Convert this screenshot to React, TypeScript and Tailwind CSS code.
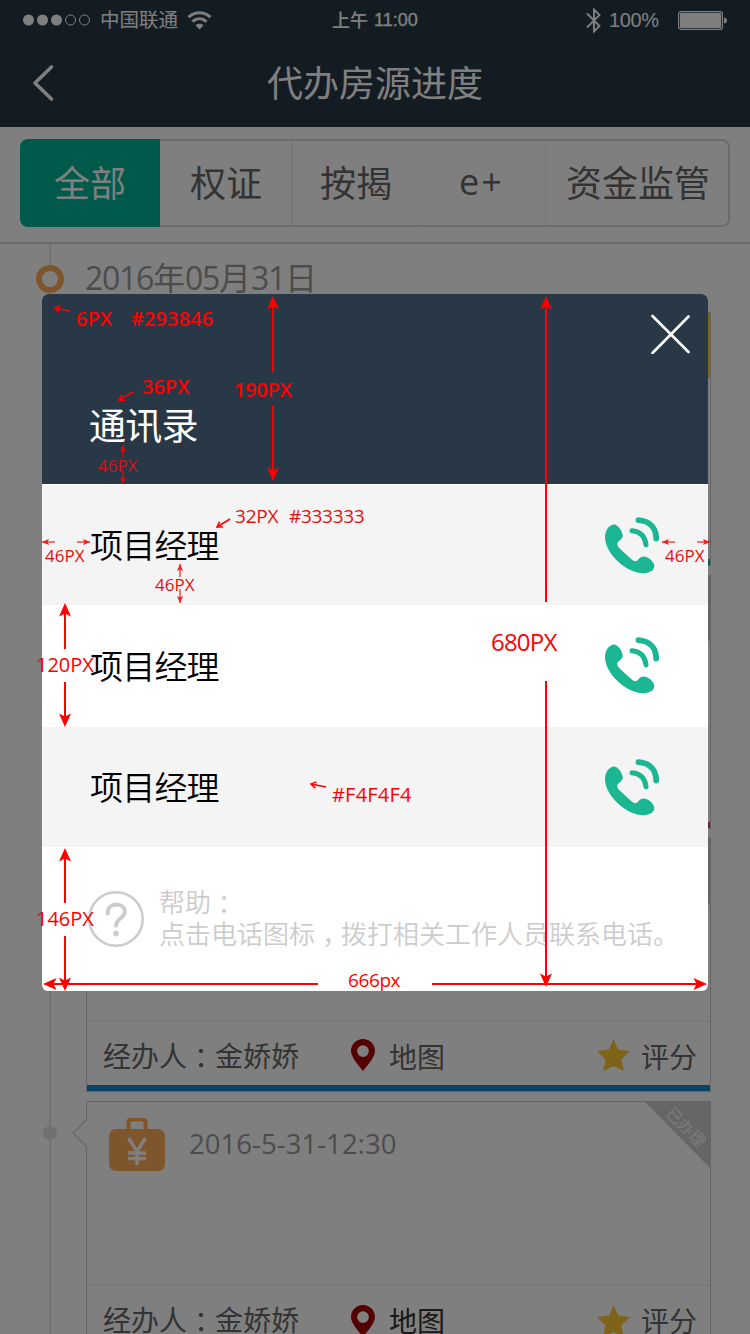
import React from "react";

const FONT = "font-['Open_Sans','Noto_Sans_CJK_SC',sans-serif]";

function Colon() {
  return (
    <span className="relative top-[2px] font-['Noto_Sans_CJK_TC',sans-serif] leading-[0]" lang="zh-TW">
      ：
    </span>
  );
}

function StatusBar() {
  return (
    <div className="flex h-10 items-center pl-[23px] pr-[22px] text-white">
      <svg width="68" height="12" viewBox="0 0 68 12" fill="currentColor">
        <circle cx="5.5" cy="6" r="5.5" />
        <circle cx="19.5" cy="6" r="5.5" />
        <circle cx="33.5" cy="6" r="5.5" />
        <circle cx="47.5" cy="6" r="5" fill="none" stroke="currentColor" />
        <circle cx="61.5" cy="6" r="5" fill="none" stroke="currentColor" />
      </svg>
      <span className="ml-[9px] w-[80px] whitespace-nowrap text-[19.5px] leading-10">中国联通</span>
      <svg className="ml-[7px]" width="25" height="19" viewBox="0 0 25 19" fill="none" stroke="currentColor" strokeWidth="3">
        <path d="M1.5 6.2C8 .2 17 .2 23.5 6.2" />
        <path d="M5.5 10.6c4.2-3.8 9.800-3.800 14 0" />
        <path d="M12.500 18.500l-4-4.300c2.400-2 5.600-2 8 0z" fill="currentColor" stroke="none" />
      </svg>
      <div className="ml-[120px] flex w-[89px] items-center whitespace-nowrap text-[18px] font-medium leading-10">
        <span>上午</span>
        <span className="ml-[6px] font-['Liberation_Sans',sans-serif] [-webkit-text-stroke:0.3px_currentColor]">11:00</span>
      </div>
      <svg className="ml-[165px]" width="16" height="27" viewBox="0 0 16 27" fill="none" stroke="currentColor" strokeWidth="1.900">
        <path d="M1 6.500l12.500 12.500L8 24.500V2.500l5.500 5.500L1 20.500" />
      </svg>
      <span className="ml-[7px] w-[55px] font-['Liberation_Sans',sans-serif] text-[20px] leading-10 tracking-[-0.4px]">100%</span>
      <svg className="ml-auto" width="50" height="19" viewBox="0 0 50 19">
        <rect x=".6" y=".6" width="43.800" height="17.800" rx="2.500" fill="none" stroke="currentColor" strokeWidth="1.200" />
        <rect x="2" y="2" width="41" height="15" rx="1" fill="currentColor" />
        <path d="M46 6.500c4 0 4 6 0 6z" fill="currentColor" />
      </svg>
    </div>
  );
}

function NavBar() {
  return (
    <div className="grid h-[87px] grid-cols-[100px_1fr_100px] items-center text-white">
      <svg className="-mt-[2px] ml-8" width="23" height="38" viewBox="0 0 23 38" fill="none" stroke="currentColor" strokeWidth="3.600" strokeLinecap="round" strokeLinejoin="round">
        <path d="M19.500 3L3 19l16.500 16" />
      </svg>
      <h1 className="text-center text-[36px] leading-[87px]">代办房源进度</h1>
    </div>
  );
}

function Tabs() {
  return (
    <div className="h-[117px] border-b-2 border-[#d4d4d4] px-5 pt-3">
      <div className="flex h-[88px] text-[36px] leading-[86px] text-[#666]">
        <div className="w-[140px] rounded-l-[8px] bg-[#00b496] pl-[34px] leading-[90px] text-white">全部</div>
        <div className="flex flex-1 rounded-r-[8px] border-2 border-l-0 border-[#d6d6d6]">
          <div className="w-[133px] border-r-2 border-[#f0f0f0] pl-[30px]">权证</div>
          <div className="w-[129px] border-r-2 border-[#f8f8f8] pl-[27px]">按揭</div>
          <div className="w-[125px] border-r-2 border-[#f8f8f8] pl-[37px] leading-[81px] tracking-[2px]">e+</div>
          <div className="flex-1 whitespace-nowrap pl-[19px]">资金监管</div>
        </div>
      </div>
    </div>
  );
}

function Pin() {
  return (
    <svg width="24" height="32" viewBox="0 0 24 32" fill="#a80000">
      <path fillRule="evenodd" d="M12 0C5.200 0 0 5.300 0 12c0 6.500 7.500 14 12 20 4.500-6 12-13.500 12-20C24 5.300 18.800 0 12 0zm0 6.200a5.900 5.900 0 110 11.800 5.900 5.900 0 010-11.800z" />
    </svg>
  );
}

function Star() {
  return (
    <svg width="33" height="32" viewBox="0 0 33 32" fill="#ffc631">
      <path d="M16.500 0l4.600 10.500 11.900 1.600-8.600 8.400 2.500 11.500-10.400-5-10.400 5 2.400-11.500L0 12.100l12-1.600z" />
    </svg>
  );
}

type CardProps = {
  bar: string;
  ribbon: string;
  head: string;
  date?: string;
  status?: string;
  handler?: string;
  mapColor?: string;
  iconShift?: string;
};

function Card({ bar, ribbon, head, date, status, handler, mapColor = "text-[#666]", iconShift = "-mt-[4px]" }: CardProps) {
  return (
    <section className="relative h-[254px] w-[625px] border border-[#c8c8c8] bg-white">
      <svg className="absolute -left-[15px] top-[16px]" width="16" height="30" viewBox="0 0 16 30">
        <path d="M15 1L1 15l14 14" fill="#fff" stroke="#d2d2d2" strokeWidth="1.400" />
        <path d="M15.500 2v26" stroke="#fff" />
      </svg>
      <div className={head}>
        <svg className="ml-[22px] mt-[16px]" width="56" height="53" viewBox="0 0 56 53">
          <path d="M19.500 12V4q0-2.500 2.500-2.500h12q2.500 0 2.500 2.500v8" fill="none" stroke="#ffab57" strokeWidth="4" />
          <rect y="11" width="56" height="42" rx="7" fill="#ffab57" />
          <path d="M19.500 20L28 33.500 36.500 20M28 33v14M19 35h18M19 40.500h18" fill="none" stroke="#fff" strokeWidth="3.400" />
        </svg>
        {date && <span className="ml-[24px] mt-[22px] text-[27.500px] leading-[40px] tracking-[0.05px] text-[#999]">{date}</span>}
      </div>
      <div className="flex h-[63px] items-center whitespace-nowrap pl-[16px] pt-[7px] text-[28px] leading-[50px] text-[#666]">
        {handler && (
          <>
            <span className="-mt-[3px] w-[248px]">经办人<Colon />{handler}</span>
            <div className={iconShift}><Pin /></div>
            <span className={`ml-[14px] w-[208px] ${mapColor}`}>地图</span>
            <div className={iconShift}><Star /></div>
            <span className="ml-[11px]">评分</span>
          </>
        )}
      </div>
      <div className={bar} />
      <svg className="absolute -top-px right-0" width="65" height="67" viewBox="0 0 65 67">
        <path className={ribbon} d="M0 1h65v66z" />
      </svg>
      {status && (
        <span className="absolute -right-[6px] top-[15px] w-[60px] rotate-45 text-center text-[16px] leading-[20px] text-[#f8f8f8]">{status}</span>
      )}
    </section>
  );
}

const HEAD = "flex h-[183px] items-start border-b-2 border-[#f3f3f3]";
const HEAD_LAST = "flex h-[184px] items-start border-b-2 border-[#f3f3f3]";

function Timeline() {
  return (
    <div className="grid grid-cols-[86px_1fr]">
      <div className="relative">
        <div className="ml-[49px] h-[1092px] w-[2px] bg-[#e4e4e4]" />
        <svg className="absolute left-[36px] top-[21px]" width="28" height="28" viewBox="0 0 28 28">
          <circle cx="14" cy="14" r="11" fill="#fff" stroke="#ffab57" strokeWidth="6" />
        </svg>
        <div className="absolute left-[43px] top-[882px] h-[14px] w-[14px] rounded-full bg-[#e2e2e2]" />
      </div>
      <div>
        <div className="-ml-px flex h-[68px] items-center text-[32px] leading-[68px] text-[#999]">
          <span className="tracking-[-1.300px]">2016</span>
          <span>年</span>
          <span className="tracking-[-1.300px]">05</span>
          <span>月</span>
          <span className="tracking-[-1.300px]">31</span>
          <span>日</span>
        </div>
        <div className="flex flex-col gap-[9px]">
          <Card head={HEAD} bar="h-[6px] bg-[#00b4b4]" ribbon="fill-[#ffc631]" />
          <Card head={HEAD} bar="h-[6px] bg-[#d84050]" ribbon="fill-[#cccccc]" />
          <Card head={HEAD} bar="h-[6px] bg-[#0f88cc]" ribbon="fill-[#cccccc]" handler="金娇娇" />
          <Card
            head={HEAD_LAST}
            bar="h-[6px] bg-[#0f88cc]"
            ribbon="fill-[#cccccc]"
            date="2016-5-31-12:30"
            status="已办理"
            handler="金娇娇"
            mapColor="text-[#333]"
            iconShift=""
          />
        </div>
      </div>
    </div>
  );
}

function PhoneIcon() {
  return (
    <svg width="54" height="57" viewBox="0 0 54 57" fill="none" stroke="#1bb793" strokeLinecap="round">
      <path
        fill="#1bb793"
        stroke="none"
        d="M8.500 7.500c3.500-.8 8.700 5.500 9.200 11 .2 4.500-5.400 5-5.400 8.500 0 2.500 2 4 4 6l11 10c2 1.700 4.500 1.500 6-.5 2.500-3.500 6-3.700 10-1.500 3.500 2 6.200 5.500 6 8.500-.4 4.500-6 6.800-11.500 6.800C22 56 0 37 0 20 0 13 4.500 8 8.500 7.500z"
      />
      <path d="M33.500 3.200C44.500 4 51 10.500 51.200 21.500" strokeWidth="5.800" />
      <path d="M27 13.700c8.500.8 13 5.500 14 14" strokeWidth="5" />
    </svg>
  );
}

function ContactRow({ className }: { className: string }) {
  return (
    <div className={`flex items-center justify-between pl-[48px] pr-[49px] ${className}`}>
      <span className="pt-[2px] text-[33px] font-[350] leading-[60px] tracking-[-0.800px]">项目经理</span>
      <PhoneIcon />
    </div>
  );
}

function ContactsDialog() {
  return (
    <div className="absolute left-[42px] top-[294px] flex h-[697px] w-[666px] flex-col overflow-hidden rounded-[6px] bg-white text-black">
      <header className="mb-px flex h-[190px] flex-col justify-between bg-[#293846] pb-[28px] pl-[47px] pr-[18px] pt-[20px] text-white">
        <svg className="self-end" width="40" height="40" viewBox="0 0 40 40" fill="none" stroke="currentColor" strokeWidth="2.600" strokeLinecap="round">
          <path d="M2.500 2L38.500 38M38.500 2.500L2.500 39" />
        </svg>
        <h2 className="text-[37px] leading-[60px] tracking-[-0.800px]">通讯录</h2>
      </header>
      <ContactRow className="h-[120px] bg-[#f4f4f4]" />
      <ContactRow className="h-[122px] bg-white pb-px" />
      <ContactRow className="h-[120px] bg-[#f4f4f4]" />
      <footer className="flex h-[144px] items-center pl-[46px] text-[#ccc]">
        <svg width="56" height="56" viewBox="0 0 56 56" fill="none" stroke="currentColor">
          <circle cx="28" cy="28" r="26.700" strokeWidth="2.600" />
          <path d="M19.800 22.500v-1c0-5 3.500-8 8.500-8s8.500 3 8.500 7.200c0 6.300-8.800 6.800-8.800 14" strokeWidth="4" strokeLinecap="round" />
          <circle cx="28" cy="42.500" r="2.900" fill="currentColor" stroke="none" />
        </svg>
        <p className="-mt-[2px] ml-[15px] whitespace-nowrap text-[26px] font-[350] leading-[32px]">
          帮助<Colon /><br />点击电话图标<span className="relative left-[7px]">，</span>拨打相关工作人员联系电话。
        </p>
      </footer>
    </div>
  );
}

const BIG_ARROWS = [
  [273, 372, 273, 296], [273, 406, 273, 481],
  [546, 602, 546, 296], [546, 681, 546, 987],
  [65, 649, 65, 603], [65, 682, 65, 727],
  [65, 903, 65, 848], [65, 936, 65, 991],
  [318, 984, 43, 984], [432, 984, 707, 984],
];

const SMALL_ARROWS = [
  [55, 542, 42, 542], [77, 542, 90, 542],
  [675, 542, 662, 542], [697, 542, 710, 542],
  [123, 457, 123, 445], [123, 470, 123, 484],
  [180, 577, 180, 564], [180, 589, 180, 603],
];

const POINTERS = [
  [70, 311, 55, 308], [133, 392, 119, 400],
  [230, 519, 217, 527], [326, 787, 311, 784],
];

function angle([x1, y1, x2, y2]: number[]) {
  return (Math.atan2(y2 - y1, x2 - x1) * 180) / Math.PI;
}

function ArrowLayer() {
  return (
    <svg className="absolute left-0 top-0" width="750" height="1334" viewBox="0 0 750 1334" fill="none" stroke="#f00">
      {BIG_ARROWS.map((a, i) => (
        <g key={`b${i}`}>
          <line x1={a[0]} y1={a[1]} x2={a[2] - Math.sign(a[2] - a[0]) * 5} y2={a[3] - Math.sign(a[3] - a[1]) * 5} strokeWidth="2" />
          <path d="M0 0L-13.500 -6L-10.500 0L-13.500 6Z" fill="#f00" stroke="none" transform={`translate(${a[2]} ${a[3]}) rotate(${angle(a)})`} />
        </g>
      ))}
      {SMALL_ARROWS.map((a, i) => (
        <g key={`s${i}`} opacity=".9">
          <line x1={a[0]} y1={a[1]} x2={a[2]} y2={a[3]} strokeWidth="1.200" />
          <path d="M0 0L-7 -3L-5.500 0L-7 3Z" fill="#f00" stroke="none" transform={`translate(${a[2]} ${a[3]}) rotate(${angle(a)})`} />
        </g>
      ))}
      {POINTERS.map((a, i) => (
        <g key={`p${i}`} strokeWidth="1.500">
          <line x1={a[0]} y1={a[1]} x2={a[2]} y2={a[3]} />
          <path d="M-5 -3.200L0 0L-5 3.200" transform={`translate(${a[2]} ${a[3]}) rotate(${angle(a)})`} />
        </g>
      ))}
    </svg>
  );
}

const LABELS = [
  { text: "6PX", className: "left-[76px] top-[309px] text-[20px] font-semibold text-[#f00]" },
  { text: "#293846", className: "left-[131px] top-[309px] text-[20px] font-semibold tracking-[0.1px] text-[#f00]" },
  { text: "36PX", className: "left-[142px] top-[377px] text-[20px] font-semibold text-[#f00]" },
  { text: "190PX", className: "left-[234px] top-[380px] text-[20px] font-semibold tracking-[-0.3px] text-[#f00]" },
  { text: "46PX", className: "left-[98px] top-[456px] text-[17px] font-medium text-[#d0141a]" },
  { text: "32PX", className: "left-[235px] top-[506px] text-[19px] tracking-[-0.2px] text-[#e60f0f]" },
  { text: "#333333", className: "left-[289px] top-[506px] text-[19px] tracking-[-0.3px] text-[#e60f0f]" },
  { text: "46PX", className: "left-[45px] top-[546px] text-[17px] text-[#e60f0f]" },
  { text: "46PX", className: "left-[155px] top-[575px] text-[17px] text-[#e60f0f]" },
  { text: "46PX", className: "left-[665px] top-[546px] text-[17px] text-[#e60f0f]" },
  { text: "120PX", className: "left-[36px] top-[655px] text-[20px] text-[#f00]" },
  { text: "146PX", className: "left-[36px] top-[909px] text-[20px] text-[#f00]" },
  { text: "680PX", className: "left-[491px] top-[632px] text-[24px] tracking-[-0.800px] text-[#f00]" },
  { text: "#F4F4F4", className: "left-[332px] top-[785px] text-[20px] tracking-[0.2px] text-[#f00]" },
  { text: "666px", className: "left-[348px] top-[970px] text-[19px] tracking-[-0.4px] text-[#f00]" },
];

function Annotations() {
  return (
    <>
      <ArrowLayer />
      {LABELS.map((l, i) => (
        <span key={i} className={`absolute whitespace-nowrap leading-[20px] ${l.className}`}>
          {l.text}
        </span>
      ))}
    </>
  );
}

export default function App() {
  return (
    <div className={`relative h-[1334px] w-[750px] overflow-hidden bg-white ${FONT}`}>
      <div className="bg-[#293846]">
        <StatusBar />
        <NavBar />
      </div>
      <Tabs />
      <Timeline />
      <div className="absolute inset-0 bg-black/50" />
      <ContactsDialog />
      <Annotations />
    </div>
  );
}
